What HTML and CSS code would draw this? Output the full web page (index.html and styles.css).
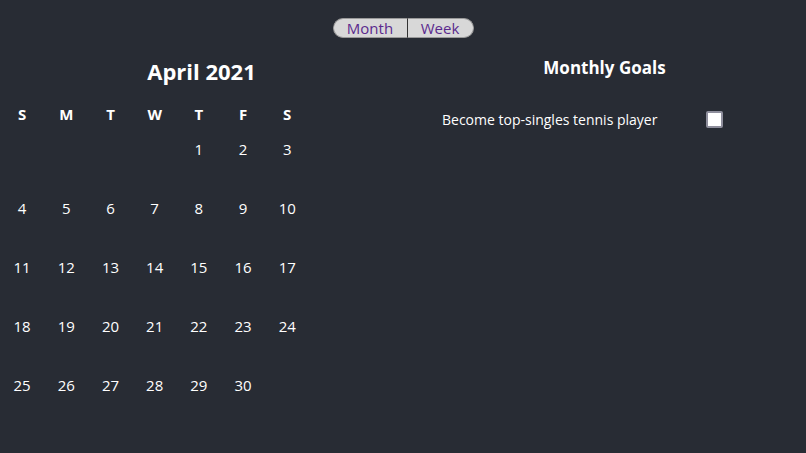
FILE: index.html
```html
<!DOCTYPE html>
<html>
<head>
<meta charset="utf-8">
<link rel="stylesheet" href="styles.css">
</head>
<body>
<div class="app">
  <div class="toggle">
    <button class="tbtn tleft">Month</button><button class="tbtn tright">Week</button>
  </div>
  <div class="main">
    <section class="cal">
      <h1 class="title">April 2021</h1>
      <div class="grid">
        <div class="wd">S</div><div class="wd">M</div><div class="wd">T</div><div class="wd">W</div><div class="wd">T</div><div class="wd">F</div><div class="wd">S</div>
        <div class="d"></div><div class="d"></div><div class="d"></div><div class="d"></div><div class="d">1</div><div class="d">2</div><div class="d">3</div>
        <div class="d">4</div><div class="d">5</div><div class="d">6</div><div class="d">7</div><div class="d">8</div><div class="d">9</div><div class="d">10</div>
        <div class="d">11</div><div class="d">12</div><div class="d">13</div><div class="d">14</div><div class="d">15</div><div class="d">16</div><div class="d">17</div>
        <div class="d">18</div><div class="d">19</div><div class="d">20</div><div class="d">21</div><div class="d">22</div><div class="d">23</div><div class="d">24</div>
        <div class="d">25</div><div class="d">26</div><div class="d">27</div><div class="d">28</div><div class="d">29</div><div class="d">30</div><div class="d"></div>
      </div>
    </section>
    <section class="goals">
      <h2 class="gtitle">Monthly Goals</h2>
      <div class="goal">
        <span class="gtext">Become top-singles tennis player</span>
        <span class="check"></span>
      </div>
    </section>
  </div>
</div>
</body>
</html>
```
FILE: styles.css
```css
html, body {
  margin: 0;
  padding: 0;
  background: #282c34;
  height: 100%;
}
body {
  font-family: "Open Sans", "Noto Sans", sans-serif;
  color: #ffffff;
}
.app {
  padding-top: 18px;
}
.toggle {
  display: flex;
  justify-content: center;
}
.tbtn {
  font-family: "Open Sans", "Noto Sans", sans-serif;
  font-size: 15px;
  line-height: 17px;
  height: 20px;
  padding: 0;
  background: #d8d8d8;
  color: #5b2a8e;
  border: 1px solid #9a9a9a;
}
.tleft {
  width: 75px;
  border-radius: 10px 0 0 10px;
  border-right: 1px solid #333;
}
.tright {
  width: 66px;
  border-radius: 0 10px 10px 0;
  border-left: none;
}
.main {
  display: flex;
}
.cal, .goals {
  width: 403px;
}
.title {
  margin: 19px 0 0 0;
  text-align: center;
  font-size: 22px;
  line-height: 28px;
  font-weight: 700;
}
.grid {
  display: grid;
  grid-template-columns: repeat(7, 44.2px);
  grid-template-rows: 18px repeat(5, 59px);
  margin-top: 20px;
}
.grid .wd {
  text-align: center;
  line-height: 18px;
  font-weight: 700;
  font-size: 15px;
}
.grid .d {
  text-align: center;
  font-size: 15px;
  line-height: 20px;
  padding-top: 16px;
}
.gtitle {
  margin: 19px 0 0 0;
  text-align: center;
  font-size: 17px;
  line-height: 22px;
  font-weight: 700;
}
.goal {
  display: flex;
  align-items: center;
  margin-top: 31px;
  padding-left: 39px;
}
.gtext {
  font-size: 14px;
}
.check {
  width: 13px;
  height: 13px;
  background: #fff;
  border: 2px solid #8e8e9c;
  border-radius: 2px;
  margin-left: 49px;
}
```
